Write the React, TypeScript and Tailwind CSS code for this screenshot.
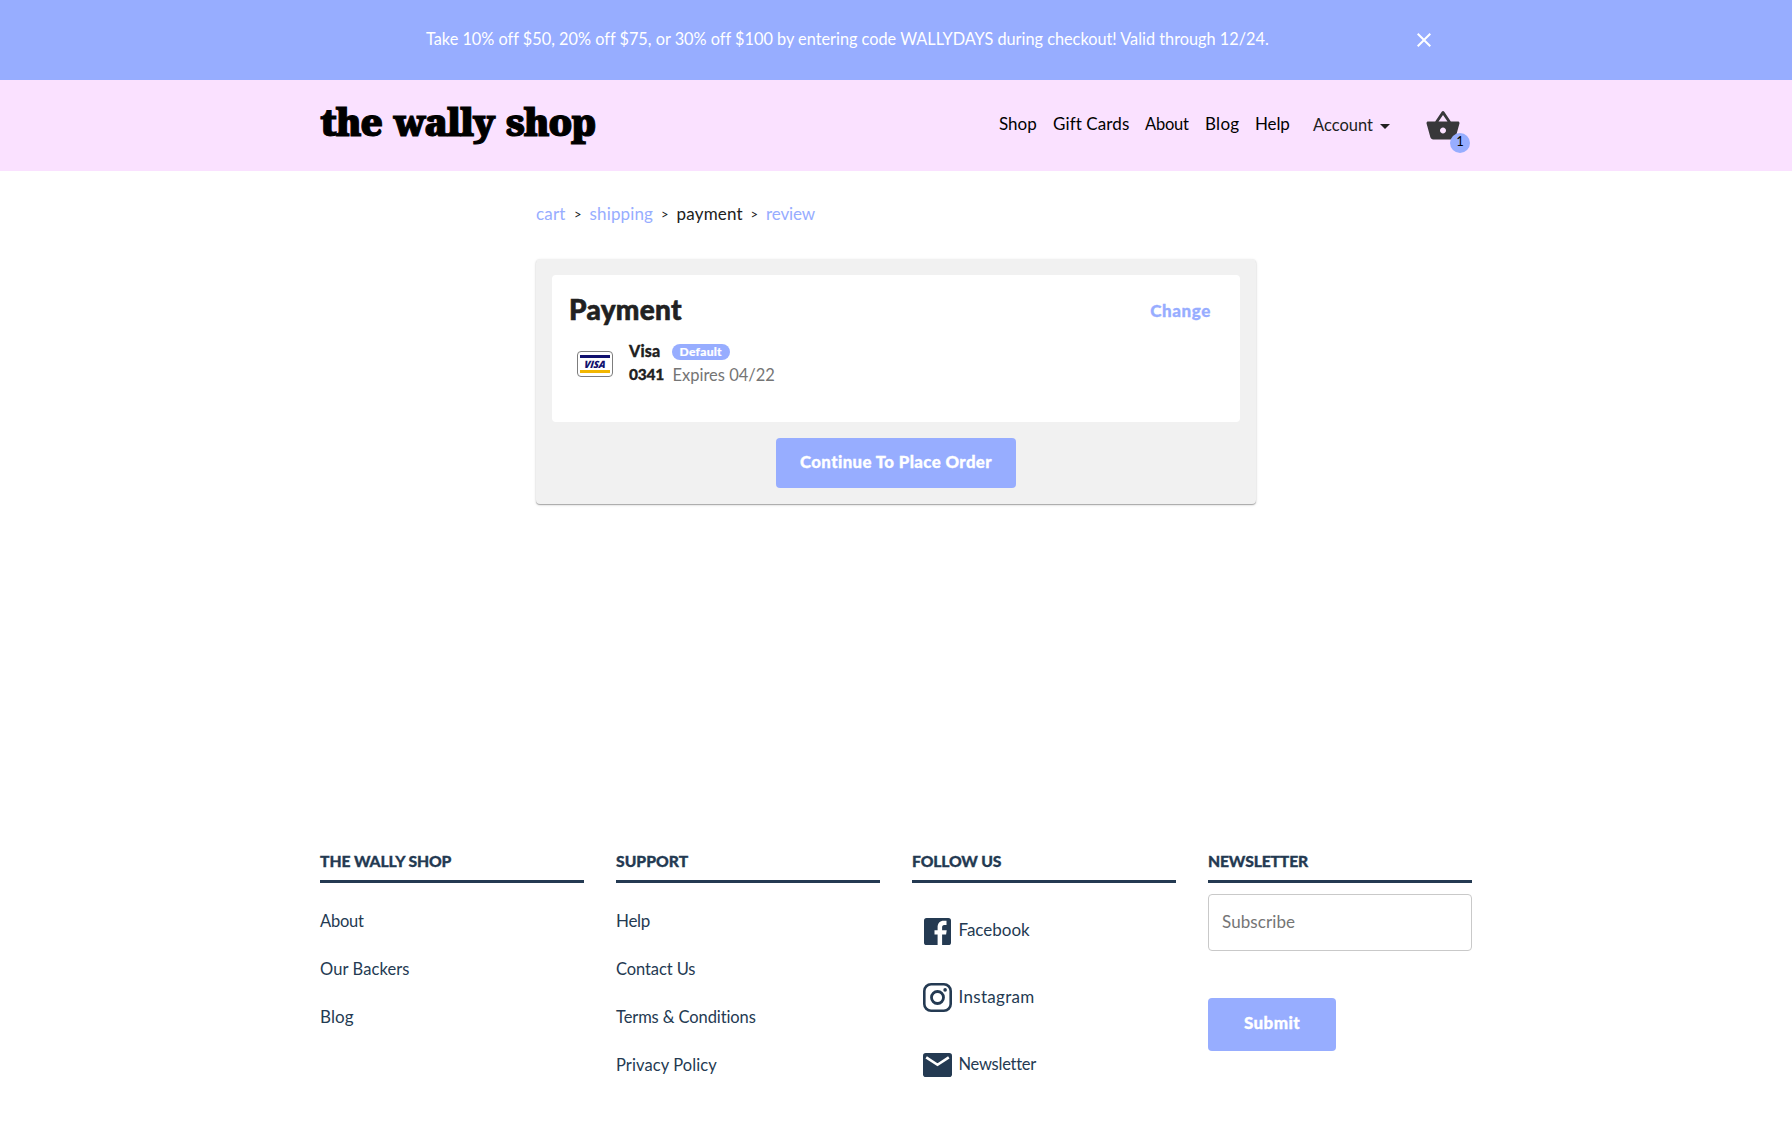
import type { ReactNode } from "react";

const navLinks = [
  { label: "Shop", cls: "w-[54px] text-[17px]" },
  { label: "Gift Cards", cls: "w-[92px] text-[17px] tracking-[0.1px]" },
  { label: "About", cls: "w-[60px] text-[16.5px] tracking-[-0.25px]" },
  { label: "Blog", cls: "w-[50px] text-[17px] tracking-[0.3px]" },
  { label: "Help", cls: "w-[58px] text-[17px] tracking-[-0.15px]" },
];

const companyLinks = [
  { label: "About", cls: "text-[16.5px] tracking-[-0.25px]" },
  { label: "Our Backers", cls: "text-[16.5px] tracking-[0.1px]" },
  { label: "Blog", cls: "text-[17px] tracking-[0.1px]" },
];

const supportLinks = [
  { label: "Help", cls: "text-[17px] tracking-[-0.3px]" },
  { label: "Contact Us", cls: "text-[16.5px] tracking-[-0.1px]" },
  { label: "Terms & Conditions", cls: "text-[16.5px] tracking-[-0.1px]" },
  { label: "Privacy Policy", cls: "text-[16.5px] tracking-[0.1px]" },
];

function CloseIcon() {
  return (
    <svg viewBox="0 0 24 24" className="size-6" fill="currentColor">
      <path d="M19 6.41L17.59 5 12 10.59 6.41 5 5 6.41 10.59 12 5 17.59 6.41 19 12 13.41 17.59 19 19 17.59 13.41 12z" />
    </svg>
  );
}

function BasketIcon() {
  return (
    <svg viewBox="0 0 24 24" className="size-9" fill="currentColor">
      <path d="M17.21 9l-4.38-6.56c-.19-.28-.51-.42-.83-.42-.32 0-.64.14-.83.43L6.79 9H2c-.55 0-1 .45-1 1 0 .09.01.18.04.27l2.54 9.27c.23.84 1 1.46 1.92 1.46h13c.92 0 1.69-.62 1.93-1.46l2.54-9.27L23 10c0-.55-.45-1-1-1h-4.79zM9 9l3-4.4L15 9H9zm3 8c-1.1 0-2-.9-2-2s.9-2 2-2 2 .9 2 2-.9 2-2 2z" />
    </svg>
  );
}

function FacebookIcon() {
  return (
    <svg viewBox="0 0 27 27" className="h-[27px] w-[27px]">
      <rect width="27" height="27" rx="2.6" fill="#243a52" />
      <path d="M13.6 27V16.4H10.5V12.2h3.1V9.4c0-4.2 2.2-6.7 6.2-6.7h2.7v4.2h-2.2c-1.7 0-2.2.9-2.2 2.4v2.9h4.6l-.6 4.2h-4V27z" fill="#fff" />
    </svg>
  );
}

function InstagramIcon() {
  return (
    <svg viewBox="0 0 29 29" className="size-[29px]" fill="none" stroke="#243a52">
      <rect x="1.3" y="1.3" width="26.4" height="26.4" rx="6.8" strokeWidth="2.6" />
      <circle cx="14.5" cy="14.5" r="6" strokeWidth="2.8" />
      <circle cx="22.1" cy="6.9" r="1.8" fill="#243a52" stroke="none" />
    </svg>
  );
}

function MailIcon() {
  return (
    <svg viewBox="0 0 29 24" className="h-6 w-[29px]">
      <rect width="29" height="24" rx="2.8" fill="#243a52" />
      <path d="M3.2 4.4L14.5 11.8L25.8 4.4" fill="none" stroke="#fff" strokeWidth="2.6" />
    </svg>
  );
}

function VisaCard() {
  return (
    <div className="flex h-[26px] w-9 flex-col justify-between rounded-[4px] border border-[#7d7d7d] bg-white px-[2px] py-[3px]">
      <div className="h-[3px] bg-[#10106e]" />
      <div className="-skew-x-6 text-center font-['Open_Sans',sans-serif] text-[10px] leading-[12px] font-extrabold tracking-[-0.2px] text-[#10106e] italic">
        VISA
      </div>
      <div className="h-[3px] bg-[#f2b600]" />
    </div>
  );
}

function FooterColumn({ title, cls, children }: { title: string; cls: string; children: ReactNode }) {
  return (
    <div className="w-[264px]">
      <h3
        className={`h-[35px] border-b-3 border-[#243a52] pt-px text-[15.7px] leading-6 font-black whitespace-nowrap [-webkit-text-stroke:0.3px_currentColor] ${cls}`}
      >
        {title}
      </h3>
      {children}
    </div>
  );
}

function LinkList({ links }: { links: { label: string; cls: string }[] }) {
  return (
    <ul className="mt-[26px] flex flex-col gap-6">
      {links.map((l) => (
        <li key={l.label} className={`leading-6 ${l.cls}`}>
          {l.label}
        </li>
      ))}
    </ul>
  );
}

export default function App() {
  return (
    <div className="min-h-[1145px] bg-white font-['Lato',sans-serif] text-[16px] text-[#212121] [font-variant-ligatures:none]">
      <div className="flex h-20 items-start bg-[#97adff] pl-[426px] text-white">
        <p className="mt-[27px] w-[986px] text-[16.3px] leading-6 whitespace-nowrap">
          Take 10% off $50, 20% off $75, or 30% off $100 by entering code WALLYDAYS during checkout! Valid through 12/24.
        </p>
        <button className="mt-7">
          <CloseIcon />
        </button>
      </div>

      <header className="h-[91px] bg-[#fae1ff]">
        <div className="mx-auto flex w-[1152px] items-start">
          <div className="mt-[13px] w-[679px] font-['Noto_Serif','DejaVu_Serif',serif] text-[38px] leading-[56px] font-black tracking-[-1.45px] [word-spacing:3.5px] whitespace-nowrap text-black [-webkit-text-stroke:1px_#000]">
            the wally shop
          </div>
          <nav className="mt-8 flex leading-6 whitespace-nowrap text-black">
            {navLinks.map((l) => (
              <a key={l.label} className={l.cls}>
                {l.label}
              </a>
            ))}
          </nav>
          <div className="mt-[33px] flex w-[111.5px] items-center leading-6">
            <span className="w-[66.5px] text-[16.5px]">Account</span>
            <svg viewBox="0 0 10 5" className="mt-0.5 h-[5px] w-[10px]" fill="currentColor">
              <path d="M0 0h10L5 5z" />
            </svg>
          </div>
          <div className="relative mt-7 text-[#38383a]">
            <BasketIcon />
            <span className="absolute top-[25px] left-[25.5px] flex h-5 w-5 justify-center rounded-full bg-[#97adff] text-[13px] leading-[17px] text-black">
              1
            </span>
          </div>
        </div>
      </header>

      <main className="mx-auto h-[682px] w-[720px] pt-[30.5px]">
        <div className="flex text-[17px] leading-6 whitespace-nowrap text-[#97adff]">
          <span className="w-[38px] tracking-[0.2px]">cart</span>
          <span className="w-[15.5px] text-[13px] text-[#212121]">&gt;</span>
          <span className="w-[71.5px] tracking-[0.15px]">shipping</span>
          <span className="w-[15.5px] text-[13px] text-[#212121]">&gt;</span>
          <span className="w-[74px] tracking-[0.2px] text-[#212121]">payment</span>
          <span className="w-[15.5px] text-[13px] text-[#212121]">&gt;</span>
          <span className="tracking-[-0.1px]">review</span>
        </div>

        <section className="mt-[33.5px] h-[245px] rounded-[4px] bg-[#f1f1f1] p-4 shadow-[0_1px_1px_rgba(0,0,0,0.28),0_1px_3px_rgba(0,0,0,0.14)]">
          <div className="h-[147px] rounded-[4px] bg-white pt-4 pl-[17px]">
            <div className="flex justify-between pr-[29px]">
              <h2 className="text-[28px] leading-9 font-black tracking-[0.3px] [-webkit-text-stroke:0.6px_currentColor]">Payment</h2>
              <a className="mt-2 text-[17px] leading-6 font-black tracking-[0.6px] text-[#97adff] [-webkit-text-stroke:0.3px_currentColor]">
                Change
              </a>
            </div>
            <div className="flex pl-2">
              <div className="mt-6">
                <VisaCard />
              </div>
              <div className="mt-3 ml-4">
                <div className="flex h-6 items-center font-black">
                  <span className="w-[42.5px] tracking-[0.2px] [-webkit-text-stroke:0.3px_currentColor]">Visa</span>
                  <span className="mt-[2px] flex h-4 w-[58.5px] justify-center rounded-full bg-[#97adff] text-[12px] leading-4 tracking-[0.3px] text-white [-webkit-text-stroke:0.2px_currentColor]">
                    Default
                  </span>
                </div>
                <div className="flex h-6 leading-6">
                  <span className="-mt-px w-[43.5px] text-[15.5px] font-black tracking-[-0.2px] [-webkit-text-stroke:0.3px_currentColor]">0341</span>
                  <span className="text-[16.5px] text-[#757575]">Expires 04/22</span>
                </div>
              </div>
            </div>
          </div>
          <button className="mx-auto mt-4 flex h-[50px] w-60 justify-center rounded-[4px] bg-[#97adff] pt-3 text-[16.8px] leading-6 font-black tracking-[0.4px] whitespace-nowrap text-white [-webkit-text-stroke:0.3px_currentColor]">
            Continue To Place Order
          </button>
        </section>
      </main>

      <footer className="mx-auto w-[1152px] text-[#243a52]">
        <div className="-mt-[5px] flex gap-8">
          <FooterColumn title="THE WALLY SHOP" cls="tracking-[-0.1px]">
            <LinkList links={companyLinks} />
          </FooterColumn>
          <FooterColumn title="SUPPORT" cls="tracking-[0px]">
            <LinkList links={supportLinks} />
          </FooterColumn>
          <FooterColumn title="FOLLOW US" cls="tracking-[-0.15px]">
            <div className="flex flex-col pt-[35px] pl-[11px] leading-6">
              <div className="flex h-[65px] items-start">
                <span className="w-[35.5px] pl-px">
                  <FacebookIcon />
                </span>
                <span className="text-[17px]">Facebook</span>
              </div>
              <div className="flex h-[70px] items-start">
                <span className="w-[35.5px]">
                  <InstagramIcon />
                </span>
                <span className="mt-[2px] text-[17px] tracking-[0.3px]">Instagram</span>
              </div>
              <div className="flex items-start">
                <span className="w-[35.5px]">
                  <MailIcon />
                </span>
                <span className="-mt-px text-[16.5px] tracking-[-0.25px]">Newsletter</span>
              </div>
            </div>
          </FooterColumn>
          <FooterColumn title="NEWSLETTER" cls="tracking-[-0.15px]">
            <div className="mt-[11px] h-[57px] rounded-[4px] border border-[#c9c9c9] pt-[15px] pl-[13px] text-[17px] leading-6 tracking-[0.1px] text-[#757575]">
              Subscribe
            </div>
            <button className="mt-[47px] flex h-[53px] w-32 justify-center rounded-[4px] bg-[#97adff] pt-[13px] text-[17px] leading-6 font-black tracking-[0.4px] text-white [-webkit-text-stroke:0.3px_currentColor]">
              Submit
            </button>
          </FooterColumn>
        </div>
      </footer>
    </div>
  );
}
